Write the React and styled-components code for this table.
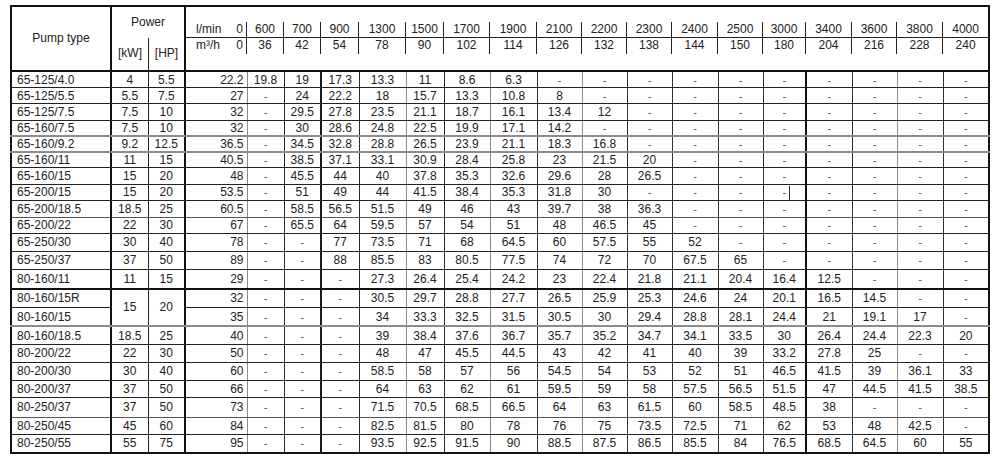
import React from "react";
import styled, { createGlobalStyle } from "styled-components";

const GlobalStyle = createGlobalStyle`
  html, body {
    margin: 0;
    padding: 0;
    background: #fff;
  }
  body {
    font-family: "Liberation Sans", Arial, sans-serif;
    color: #222;
  }
`;

const flowLmin = [0, 600, 700, 900, 1300, 1500, 1700, 1900, 2100, 2200, 2300, 2400, 2500, 3000, 3400, 3600, 3800, 4000];
const flowM3h = [0, 36, 42, 54, 78, 90, 102, 114, 126, 132, 138, 144, 150, 180, 204, 216, 228, 240];

// widths of every column, pixels
const colWidths = [100, 37, 37, 62, 37, 37, 38, 47, 38, 46, 47, 45, 45, 45, 46, 45, 43, 46, 45, 46, 46];

// left border of every flow column (index 0 = the "0" column)
const flowBorders = [
    "2px solid #111",
    "1px solid #8a8a8a",
    "1px solid #2a2a2a",
    "2px solid #1a1a1a",
    "1px solid #2a2a2a",
    "1px solid #8a8a8a",
    "1px solid #2a2a2a",
    "1px solid #8a8a8a",
    "1px solid #333",
    "1px solid #8a8a8a",
    "1px solid #333",
    "1px solid #333",
    "1px solid #333",
    "1px solid #333",
    "2px solid #111",
    "1px solid #333",
    "1px solid #8a8a8a",
    "1px solid #333",
];

const D = "-";

const rows = [
    { name: "65-125/4.0", kw: "4", hp: "5.5", h: 16.6, line: "1px solid #222", v: [22.2, 19.8, 19, 17.3, 13.3, 11, 8.6, 6.3, D, D, D, D, D, D, D, D, D, D] },
    { name: "65-125/5.5", kw: "5.5", hp: "7.5", h: 16.4, line: "1px solid #222", v: [27, D, 24, 22.2, 18, 15.7, 13.3, 10.8, 8, D, D, D, D, D, D, D, D, D] },
    { name: "65-125/7.5", kw: "7.5", hp: "10", h: 16.3, line: "1px solid #222", v: [32, D, 29.5, 27.8, 23.5, 21.1, 18.7, 16.1, 13.4, 12, D, D, D, D, D, D, D, D] },
    { name: "65-160/7.5", kw: "7.5", hp: "10", h: 16, line: "2px solid #8c8c8c", v: [32, D, 30, 28.6, 24.8, 22.5, 19.9, 17.1, 14.2, D, D, D, D, D, D, D, D, D] },
    { name: "65-160/9.2", kw: "9.2", hp: "12.5", h: 16, line: "2px solid #8c8c8c", v: [36.5, D, 34.5, 32.8, 28.8, 26.5, 23.9, 21.1, 18.3, 16.8, D, D, D, D, D, D, D, D] },
    { name: "65-160/11", kw: "11", hp: "15", h: 14.7, line: "1px solid #222", v: [40.5, D, 38.5, 37.1, 33.1, 30.9, 28.4, 25.8, 23, 21.5, 20, D, D, D, D, D, D, D] },
    { name: "65-160/15", kw: "15", hp: "20", h: 16.6, line: "1px solid #222", v: [48, D, 45.5, 44, 40, 37.8, 35.3, 32.6, 29.6, 28, 26.5, D, D, D, D, D, D, D] },
    { name: "65-200/15", kw: "15", hp: "20", h: 16, line: "1px solid #222", tick: 13, v: [53.5, D, 51, 49, 44, 41.5, 38.4, 35.3, 31.8, 30, D, D, D, D, D, D, D, D] },
    { name: "65-200/18.5", kw: "18.5", hp: "25", h: 16.7, line: "1px solid #555", v: [60.5, D, 58.5, 56.5, 51.5, 49, 46, 43, 39.7, 38, 36.3, D, D, D, D, D, D, D] },
    { name: "65-200/22", kw: "22", hp: "30", h: 16.3, line: "1px solid #222", v: [67, D, 65.5, 64, 59.5, 57, 54, 51, 48, 46.5, 45, D, D, D, D, D, D, D] },
    { name: "65-250/30", kw: "30", hp: "40", h: 17.7, line: "1px solid #222", v: [78, D, D, 77, 73.5, 71, 68, 64.5, 60, 57.5, 55, 52, D, D, D, D, D, D] },
    { name: "65-250/37", kw: "37", hp: "50", h: 18.3, line: "1px solid #222", v: [89, D, D, 88, 85.5, 83, 80.5, 77.5, 74, 72, 70, 67.5, 65, D, D, D, D, D] },
    { name: "80-160/11", kw: "11", hp: "15", h: 19.2, line: "2px solid #111", v: [29, D, D, D, 27.3, 26.4, 25.4, 24.2, 23, 22.4, 21.8, 21.1, 20.4, 16.4, 12.5, D, D, D] },
    { name: "80-160/15R", kw: "15", hp: "20", span: 2, h: 19.2, line: "1px solid #222", v: [32, D, D, D, 30.5, 29.7, 28.8, 27.7, 26.5, 25.9, 25.3, 24.6, 24, 20.1, 16.5, 14.5, D, D] },
    { name: "80-160/15", h: 18.3, line: "2px solid #8c8c8c", v: [35, D, D, D, 34, 33.3, 32.5, 31.5, 30.5, 30, 29.4, 28.8, 28.1, 24.4, 21, 19.1, 17, D] },
    { name: "80-160/18.5", kw: "18.5", hp: "25", h: 18.3, line: "1px solid #222", v: [40, D, D, D, 39, 38.4, 37.6, 36.7, 35.7, 35.2, 34.7, 34.1, 33.5, 30, 26.4, 24.4, 22.3, 20] },
    { name: "80-200/22", kw: "22", hp: "30", h: 17.7, line: "1px solid #222", v: [50, D, D, D, 48, 47, 45.5, 44.5, 43, 42, 41, 40, 39, 33.2, 27.8, 25, D, D] },
    { name: "80-200/30", kw: "30", hp: "40", h: 18, line: "1px solid #222", v: [60, D, D, D, 58.5, 58, 57, 56, 54.5, 54, 53, 52, 51, 46.5, 41.5, 39, 36.1, 33] },
    { name: "80-200/37", kw: "37", hp: "50", h: 17.7, line: "1px solid #222", v: [66, D, D, D, 64, 63, 62, 61, 59.5, 59, 58, 57.5, 56.5, 51.5, 47, 44.5, 41.5, 38.5] },
    { name: "80-250/37", kw: "37", hp: "50", h: 19.3, line: "1px solid #555", v: [73, D, D, D, 71.5, 70.5, 68.5, 66.5, 64, 63, 61.5, 60, 58.5, 48.5, 38, D, D, D] },
    { name: "80-250/45", kw: "45", hp: "60", h: 17.3, line: "1px solid #222", v: [84, D, D, D, 82.5, 81.5, 80, 78, 76, 75, 73.5, 72.5, 71, 62, 53, 48, 42.5, D] },
    { name: "80-250/55", kw: "55", hp: "75", h: 18.4, line: "none", v: [95, D, D, D, 93.5, 92.5, 91.5, 90, 88.5, 87.5, 86.5, 85.5, 84, 76.5, 68.5, 64.5, 60, 55] },
];

const Page = styled.div`
    padding: 5px 0 0 10px;
`;

const Table = styled.table`
    border-collapse: collapse;
    table-layout: fixed;
    width: 979px;
    border: 2px solid #111;
    font-size: 12px;
    line-height: 14px;
    color: #222;
`;

const HeadRow = styled.tr`
    height: 63px;
    & > td {
        border-bottom: 2px solid #111;
    }
`;

const PumpHead = styled.td`
    text-align: center;
    vertical-align: middle;
    padding: 0 0 2px;
    border-right: 2px solid #111;
`;

const PowerHead = styled.td`
    padding: 0;
    vertical-align: top;
`;

const PowerTitle = styled.div`
    height: 31px;
    box-sizing: border-box;
    padding-top: 8px;
    text-align: center;
`;

const PowerUnits = styled.div`
    display: grid;
    grid-template-columns: 36px 1fr;
    height: 32px;
`;

const Unit = styled.div`
    display: flex;
    align-items: center;
    justify-content: center;
    padding-bottom: 2px;
    border-left: ${p => (p.$divided ? "1px solid #222" : "none")};
`;

const FlowHead = styled.td`
    padding: 0;
    vertical-align: top;
    border-left: 2px solid #111;
`;

const FlowGrid = styled.div`
    display: grid;
    grid-template-columns: 61px 37px 37px 38px 47px 38px 46px 47px 45px 45px 45px 46px 45px 43px 46px 45px 46px 1fr;
    margin-top: 15px;
`;

const FlowHeadCol = styled.div`
    display: flex;
    flex-direction: column;
`;

const FlowHeadTop = styled.div`
    display: flex;
    justify-content: ${p => (p.$first ? "space-between" : "center")};
    height: 15px;
    line-height: 15px;
    border-bottom: 1px solid #222;
    padding: ${p => (p.$first ? "0 3px 0 10px" : "0")};
    border-right: ${p => (p.$last ? "none" : "1px solid #222")};
`;

const FlowHeadBottom = styled(FlowHeadTop)`
    height: 16px;
    line-height: 14px;
    border-bottom: none;
`;

const BodyRow = styled.tr`
    height: ${p => p.$h}px;
    & > td {
        border-bottom: ${p => p.$line};
    }
`;

const NameCell = styled.td`
    padding: 0 0 0 5px;
    white-space: nowrap;
    border-right: 2px solid #111;
`;

const PowerCell = styled.td`
    padding: 0;
    text-align: center;
    border-left: ${p => (p.$hp ? "1px solid #222" : "none")};
    border-bottom: ${p => p.$bottom} !important;
`;

const FlowCell = styled.td`
    padding: 0 ${p => (p.$first ? "3px" : "0")} 0 0;
    text-align: ${p => (p.$first ? "right" : "center")};
    border-left: ${p => p.$border};
    color: ${p => (p.$dash ? "#555" : "#222")};
    font-size: ${p => (p.$dash ? "11px" : "12px")};
    white-space: nowrap;
`;

const Tick = styled.span`
    display: inline-block;
    width: 1px;
    height: 14px;
    margin-left: 3px;
    margin-right: -4px;
    background: #333;
    vertical-align: middle;
`;

function HeaderRow() {
    return (
        <HeadRow>
            <PumpHead>Pump type</PumpHead>
            <PowerHead colSpan={2}>
                <PowerTitle>Power</PowerTitle>
                <PowerUnits>
                    <Unit>[kW]</Unit>
                    <Unit $divided>[HP]</Unit>
                </PowerUnits>
            </PowerHead>
            <FlowHead colSpan={18}>
                <FlowGrid>
                    {flowLmin.map((q, i) => {
                        const first = i === 0;
                        const last = i === flowLmin.length - 1;
                        return (
                            <FlowHeadCol key={q}>
                                <FlowHeadTop $first={first} $last={last}>
                                    {first && <span>l/min</span>}
                                    <span>{q}</span>
                                </FlowHeadTop>
                                <FlowHeadBottom $first={first} $last={last}>
                                    {first && <span>m³/h</span>}
                                    <span>{flowM3h[i]}</span>
                                </FlowHeadBottom>
                            </FlowHeadCol>
                        );
                    })}
                </FlowGrid>
            </FlowHead>
        </HeadRow>
    );
}

export default function App() {
    return (
        <Page>
            <GlobalStyle />
            <Table>
                <colgroup>
                    {colWidths.map((w, i) => (
                        <col key={i} style={{ width: w }} />
                    ))}
                </colgroup>
                <tbody>
                    <HeaderRow />
                    {rows.map((r, ri) => {
                        const spanLine = r.span ? rows[ri + 1].line : r.line;
                        return (
                            <BodyRow key={r.name} $h={r.h} $line={r.line}>
                                <NameCell>{r.name}</NameCell>
                                {r.kw !== undefined && (
                                    <>
                                        <PowerCell rowSpan={r.span || 1} $bottom={spanLine}>{r.kw}</PowerCell>
                                        <PowerCell rowSpan={r.span || 1} $bottom={spanLine} $hp>{r.hp}</PowerCell>
                                    </>
                                )}
                                {r.v.map((val, i) => (
                                    <FlowCell
                                        key={i}
                                        $first={i === 0}
                                        $border={flowBorders[i]}
                                        $dash={val === D}
                                    >
                                        {val}
                                        {r.tick === i && <Tick />}
                                    </FlowCell>
                                ))}
                            </BodyRow>
                        );
                    })}
                </tbody>
            </Table>
        </Page>
    );
}
